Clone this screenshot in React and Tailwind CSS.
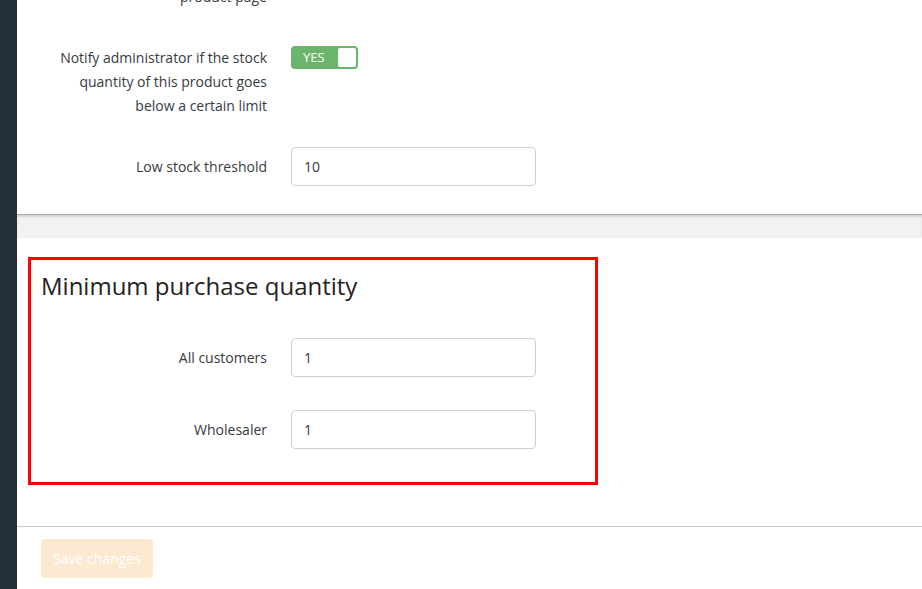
export default function App() {
  return (
    <div
      className="flex w-[922px] h-[589px] overflow-hidden bg-white text-[#363a41]"
      style={{ fontFamily: '"Open Sans", "Noto Sans", sans-serif' }}
    >
      <div className="w-[17px] shrink-0 bg-[#25313a]" />
      <div className="flex-1 flex flex-col">
        {/* top panel */}
        <div className="bg-white pl-[24px] pb-[28px]">
          <div className="w-[226px] text-right text-[14px] leading-[24px] -mt-[15px]">
            product page
          </div>
          <div className="flex items-start gap-[24px] mt-[37px]">
            <div className="w-[226px] text-right text-[14px] leading-[24px]">
              Notify administrator if the stock quantity of this product goes below a certain limit
            </div>
            <div className="w-[67px] h-[23px] rounded-[4px] bg-[#6ab56b] flex items-center justify-between px-[2px]">
              <span className="pl-[10px] text-white text-[13px] leading-none">YES</span>
              <span className="w-[18px] h-[19px] bg-white rounded-[2px]" />
            </div>
          </div>
          <div className="flex items-center gap-[24px] mt-[29px]">
            <div className="w-[226px] text-right text-[14px]">Low stock threshold</div>
            <input
              defaultValue="10"
              className="w-[245px] h-[39px] border border-[#cfcfcf] rounded-[4px] px-[12px] text-[14px] outline-none"
            />
          </div>
        </div>
        {/* gray strip */}
        <div className="h-[24px] bg-[#f2f2f2] border-t border-[#a8a8a8] shadow-[inset_0_2px_2px_rgba(0,0,0,0.12)]" />
        {/* section */}
        <div className="pt-[19px] pl-[11px]">
          <div className="w-[570px] h-[228px] border-[3px] border-[#ff0000] pl-[10px] pt-[12px]">
            <h2 className="text-[24px] leading-[28px] text-[#222]">Minimum purchase quantity</h2>
            <div className="flex items-center gap-[24px] mt-[38px] -ml-[13px]">
              <div className="w-[226px] text-right text-[14px] pl-[13px] box-content">All customers</div>
              <input
                defaultValue="1"
                className="w-[245px] h-[39px] border border-[#cfcfcf] rounded-[4px] px-[12px] text-[14px] outline-none"
              />
            </div>
            <div className="flex items-center gap-[24px] mt-[33px] -ml-[13px]">
              <div className="w-[226px] text-right text-[14px] pl-[13px] box-content">Wholesaler</div>
              <input
                defaultValue="1"
                className="w-[245px] h-[39px] border border-[#cfcfcf] rounded-[4px] px-[12px] text-[14px] outline-none"
              />
            </div>
          </div>
        </div>
        <div className="mt-[41px] border-t border-[#cccccc] pl-[24px] pt-[12px]">
          <button className="w-[112px] h-[39px] rounded-[4px] bg-[#fbe9d1] text-white text-[14px]">
            Save changes
          </button>
        </div>
      </div>
    </div>
  );
}
